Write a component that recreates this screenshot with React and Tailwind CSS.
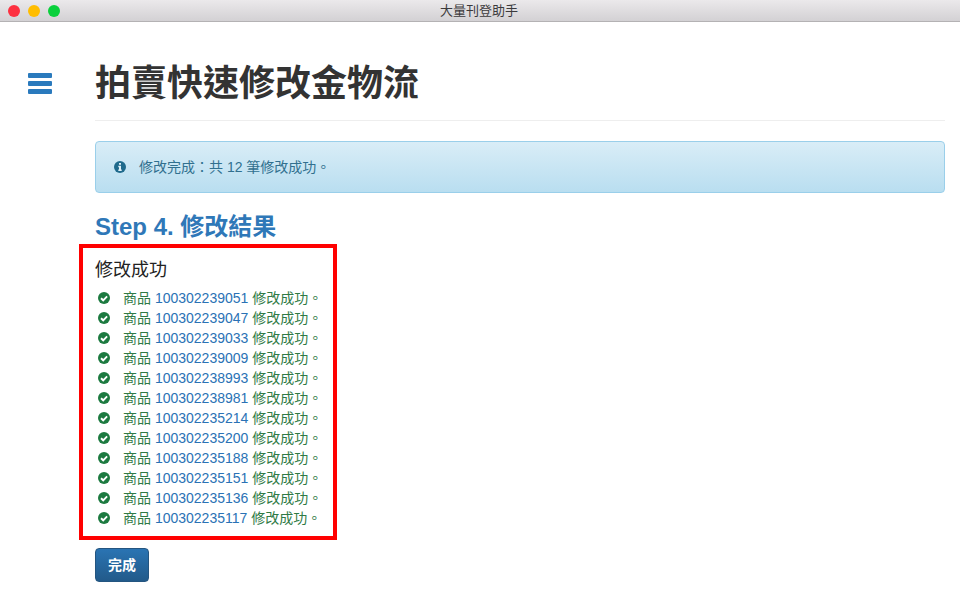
import React from 'react'

const items = [
  '100302239051',
  '100302239047',
  '100302239033',
  '100302239009',
  '100302238993',
  '100302238981',
  '100302235214',
  '100302235200',
  '100302235188',
  '100302235151',
  '100302235136',
  '100302235117',
]

const CheckIcon = () => (
  <svg viewBox="0 0 12 12" className="ml-[3px] h-3 w-3 shrink-0">
    <circle cx="6" cy="6" r="6" fill="#1c7a40" />
    <path d="M3 6.2 L5.2 8.3 L9.1 4.3" fill="none" stroke="#fff" strokeWidth="1.9" />
  </svg>
)

const InfoIcon = () => (
  <svg viewBox="0 0 12 12" className="h-3 w-3 shrink-0">
    <circle cx="6" cy="6" r="6" fill="#1f6a8c" />
    <path d="M5 2 H7 V3.7 H5 Z M4.3 4.8 H7 V8.4 H7.7 V9.9 H4.3 V8.4 H5 V6.2 H4.3 Z" fill="#dff0f8" />
  </svg>
)

const App = () => {
  return (
    <div className="h-[600px] w-[960px] overflow-hidden bg-white font-['Liberation_Sans','Noto_Sans_CJK_TC',sans-serif] text-[14px] text-[#333]">
      {/* window title bar */}
      <div className="flex h-[22px] items-center border-b border-[#b4b2b4] bg-gradient-to-b from-[#ebe9eb] to-[#d3d1d4] pl-2">
        <div className="flex gap-2">
          <span className="h-3 w-3 rounded-full bg-[#fd3040]"></span>
          <span className="h-3 w-3 rounded-full bg-[#ffbd00]"></span>
          <span className="h-3 w-3 rounded-full bg-[#0ad03c]"></span>
        </div>
        <div className="ml-[-62px] flex-1 text-center text-[13px] leading-[21px] text-[#3c3a3c]">大量刊登助手</div>
      </div>

      <div className="flex">
        {/* sidebar */}
        <div className="w-[95px] pl-7 pt-[51px]">
          <div className="flex w-6 flex-col gap-[3px]">
            <span className="h-[5px] rounded-[1px] bg-[#2a7abd]"></span>
            <span className="h-[5px] rounded-[1px] bg-[#2a7abd]"></span>
            <span className="h-[5px] rounded-[1px] bg-[#2a7abd]"></span>
          </div>
        </div>

        {/* content */}
        <div className="w-[850px]">
          <div className="mt-[35px] border-b border-[#eee] pb-[9px]">
            <h1 className="text-[36px] font-bold leading-[54px] text-[#333]">拍賣快速修改金物流</h1>
          </div>

          <div className="mt-5 flex h-[52px] items-center rounded border border-[#9acfea] bg-gradient-to-b from-[#d9edf7] to-[#b9def0] pl-[18px] text-[#31708f]">
            <InfoIcon />
            <span className="ml-[13px]">修改完成：共 12 筆修改成功。</span>
          </div>

          <h3 className="mt-[17px] text-[24px] font-bold leading-[34px] text-[#2f78b8]">Step 4. 修改結果</h3>

          {/* red highlight box */}
          <div className="ml-[-16px] mt-0 h-[296px] w-[258px] border-4 border-[#ff0000] pl-3 pt-[9px]">
            <h4 className="text-[18px] font-normal leading-[26px] text-[#222]">修改成功</h4>
            <ul className="mt-[5px]">
              {items.map((id) => (
                <li key={id} className="flex h-5 items-center leading-5 text-[#2f7a45]">
                  <CheckIcon />
                  <span className="ml-[13px] whitespace-nowrap">
                    商品 <a className="text-[#2a72b5]">{id}</a> 修改成功。
                  </span>
                </li>
              ))}
            </ul>
          </div>

          <button className="mt-2 h-[34px] w-[54px] rounded border border-[#245580] bg-gradient-to-b from-[#2a74b3] to-[#225a8a] text-[14px] font-bold text-white">
            完成
          </button>
        </div>
      </div>
    </div>
  )
}

export default App
